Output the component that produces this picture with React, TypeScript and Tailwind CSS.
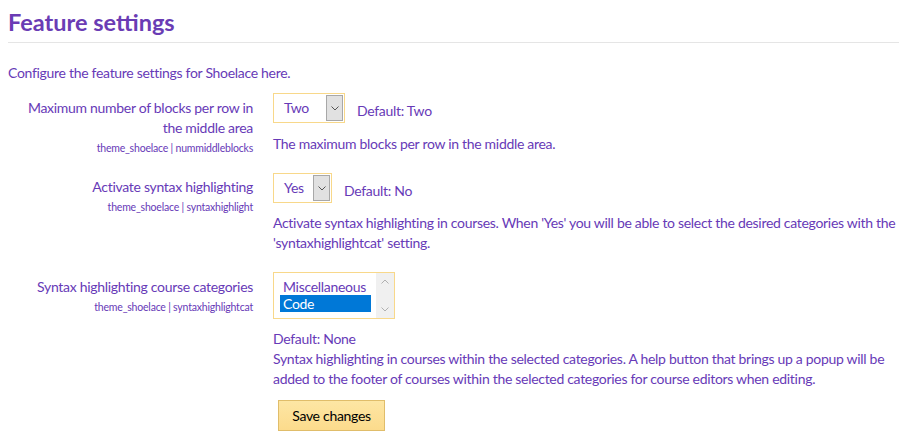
import React from "react";

const Chevron = ({ dir = "down", color = "#555" }: { dir?: "down" | "up"; color?: string }) => (
  <svg width="8" height="5" viewBox="0 0 8 5" className="block">
    {dir === "down" ? (
      <path d="M0.5 0.5 L4 4 L7.5 0.5" fill="none" stroke={color} strokeWidth="1" />
    ) : (
      <path d="M0.5 4.5 L4 1 L7.5 4.5" fill="none" stroke={color} strokeWidth="1" />
    )}
  </svg>
);

const Select = ({ value, width }: { value: string; width: string }) => (
  <div className={`flex h-[30px] ${width} border border-[#f8d88a] bg-white`}>
    <div className="flex flex-1 items-center pl-[10px] text-[14px]">{value}</div>
    <div className="my-px mr-px flex w-[17px] items-center justify-center border border-[#a8a8a8] bg-[#e1e1e1]">
      <Chevron />
    </div>
  </div>
);

export default function App() {
  return (
    <div className="min-h-[438px] bg-white px-2 pt-[6px] font-['Lato','Liberation_Sans',sans-serif] text-[14px] leading-5 tracking-[-0.3px] text-[#673ab7]">
      <h2 className="text-[23.5px] font-bold leading-8 tracking-normal text-[#6a3cb4]">Feature settings</h2>
      <div className="mt-[4px] h-px bg-[#e5e5e5]" />
      <p className="mt-[20px]">Configure the feature settings for Shoelace here.</p>

      <div className="mt-[10px] grid grid-cols-[245px_1fr] gap-x-5">
        {/* Row 1 */}
        <div className="pt-[5px] text-right">
          <div>Maximum number of blocks per row in the middle area</div>
          <div className="-mb-[5px] text-[10.5px] tracking-[-0.2px]">theme_shoelace | nummiddleblocks</div>
        </div>
        <div>
          <div className="flex items-center gap-3">
            <Select value="Two" width="w-[72px]" />
            <span className="pt-[6px]">Default: Two</span>
          </div>
          <p className="mt-[11px]">The maximum blocks per row in the middle area.</p>
        </div>

        {/* Row 2 */}
        <div className="mt-[19px] pt-[4px] text-right">
          <div>Activate syntax highlighting</div>
          <div className="text-[10.5px] tracking-[-0.2px]">theme_shoelace | syntaxhighlight</div>
        </div>
        <div className="mt-[19px]">
          <div className="flex items-center gap-3">
            <Select value="Yes" width="w-[59px]" />
            <span className="pt-[6px]">Default: No</span>
          </div>
          <p className="mt-[10px]">
            Activate syntax highlighting in courses. When 'Yes' you will be able to select the desired categories with the
            'syntaxhighlightcat' setting.
          </p>
        </div>

        {/* Row 3 */}
        <div className="mt-[19px] pt-[5px] text-right">
          <div>Syntax highlighting course categories</div>
          <div className="text-[10.5px] tracking-[-0.2px]">theme_shoelace | syntaxhighlightcat</div>
        </div>
        <div className="mt-[19px]">
          <div className="flex h-[47px] w-[122px] border border-[#f8d88a] bg-white">
            <div className="flex-1 pl-[6px] pr-[5px] pt-[5px] leading-[17px]">
              <div className="pl-[3px]">Miscellaneous</div>
              <div className="bg-[#0078d7] pl-[3px] text-white">Code</div>
            </div>
            <div className="flex w-[18px] flex-col items-center justify-between bg-[#f0f0f0] py-[6px]">
              <Chevron dir="up" color="#b0b0b0" />
              <Chevron color="#b0b0b0" />
            </div>
          </div>
          <p className="mt-[10px]">Default: None</p>
          <p>
            Syntax highlighting in courses within the selected categories. A help button that brings up a popup will be
            added to the footer of courses within the selected categories for course editors when editing.
          </p>
          <button className="ml-[5px] mt-[11px] h-[31px] w-[107px] border border-[#e0bd6a] bg-gradient-to-b from-[#fde6a4] to-[#fcdb8c] text-[14px] text-black">
            Save changes
          </button>
        </div>
      </div>
    </div>
  );
}
